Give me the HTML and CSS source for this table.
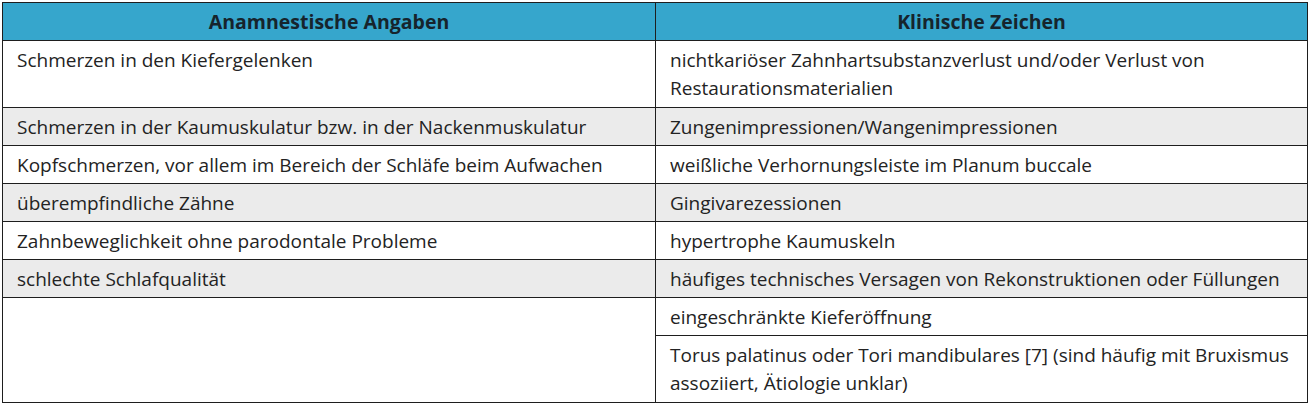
FILE: index.html
```html
<!DOCTYPE html>
<html lang="de">
<head>
<meta charset="utf-8">
<link rel="stylesheet" href="styles.css">
</head>
<body>
<table class="tbl">
  <thead>
    <tr><th class="col-l">Anamnestische Angaben</th><th>Klinische Zeichen</th></tr>
  </thead>
  <tbody>
    <tr class="tall"><td>Schmerzen in den Kiefergelenken</td><td>nichtkariöser Zahnhartsubstanzverlust und/oder Verlust von Restaurationsmaterialien</td></tr>
    <tr class="alt"><td>Schmerzen in der Kaumuskulatur bzw. in der Nackenmuskulatur</td><td>Zungenimpressionen/Wangenimpressionen</td></tr>
    <tr><td>Kopfschmerzen, vor allem im Bereich der Schläfe beim Aufwachen</td><td>weißliche Verhornungsleiste im Planum buccale</td></tr>
    <tr class="alt"><td>überempfindliche Zähne</td><td>Gingivarezessionen</td></tr>
    <tr><td>Zahnbeweglichkeit ohne parodontale Probleme</td><td>hypertrophe Kaumuskeln</td></tr>
    <tr class="alt"><td>schlechte Schlafqualität</td><td>häufiges technisches Versagen von Rekonstruktionen oder Füllungen</td></tr>
    <tr><td rowspan="2"></td><td>eingeschränkte Kieferöffnung</td></tr>
    <tr class="tall"><td>Torus palatinus oder Tori mandibulares [7] (sind häufig mit Bruxismus assoziiert, Ätiologie unklar)</td></tr>
  </tbody>
</table>
</body>
</html>
```
FILE: styles.css
```css
html, body {
  margin: 0;
  padding: 0;
  background: #ffffff;
}
body {
  padding: 2px 0 0 2px;
  font-family: "Open Sans", "Noto Sans", sans-serif;
  color: #232323;
}
.tbl {
  border-collapse: collapse;
  width: 1306px;
  table-layout: fixed;
  font-size: 19px;
}
.tbl th, .tbl td {
  border: 1px solid #1e1e1e;
  text-align: left;
  vertical-align: top;
}
.tbl th {
  background: #36a6cc;
  color: #16242c;
  font-weight: 700;
  font-size: 19.5px;
  text-align: center;
  line-height: 28px;
  padding: 5px 14px 4px 14px;
}
.tbl th.col-l {
  width: 624px;
}
.tbl td {
  line-height: 28px;
  padding: 5px 14px 4px 14px;
}
.tbl tr.tall td {
  padding-bottom: 5px;
}
.tbl tr.alt td {
  background: #ebebeb;
}
```
